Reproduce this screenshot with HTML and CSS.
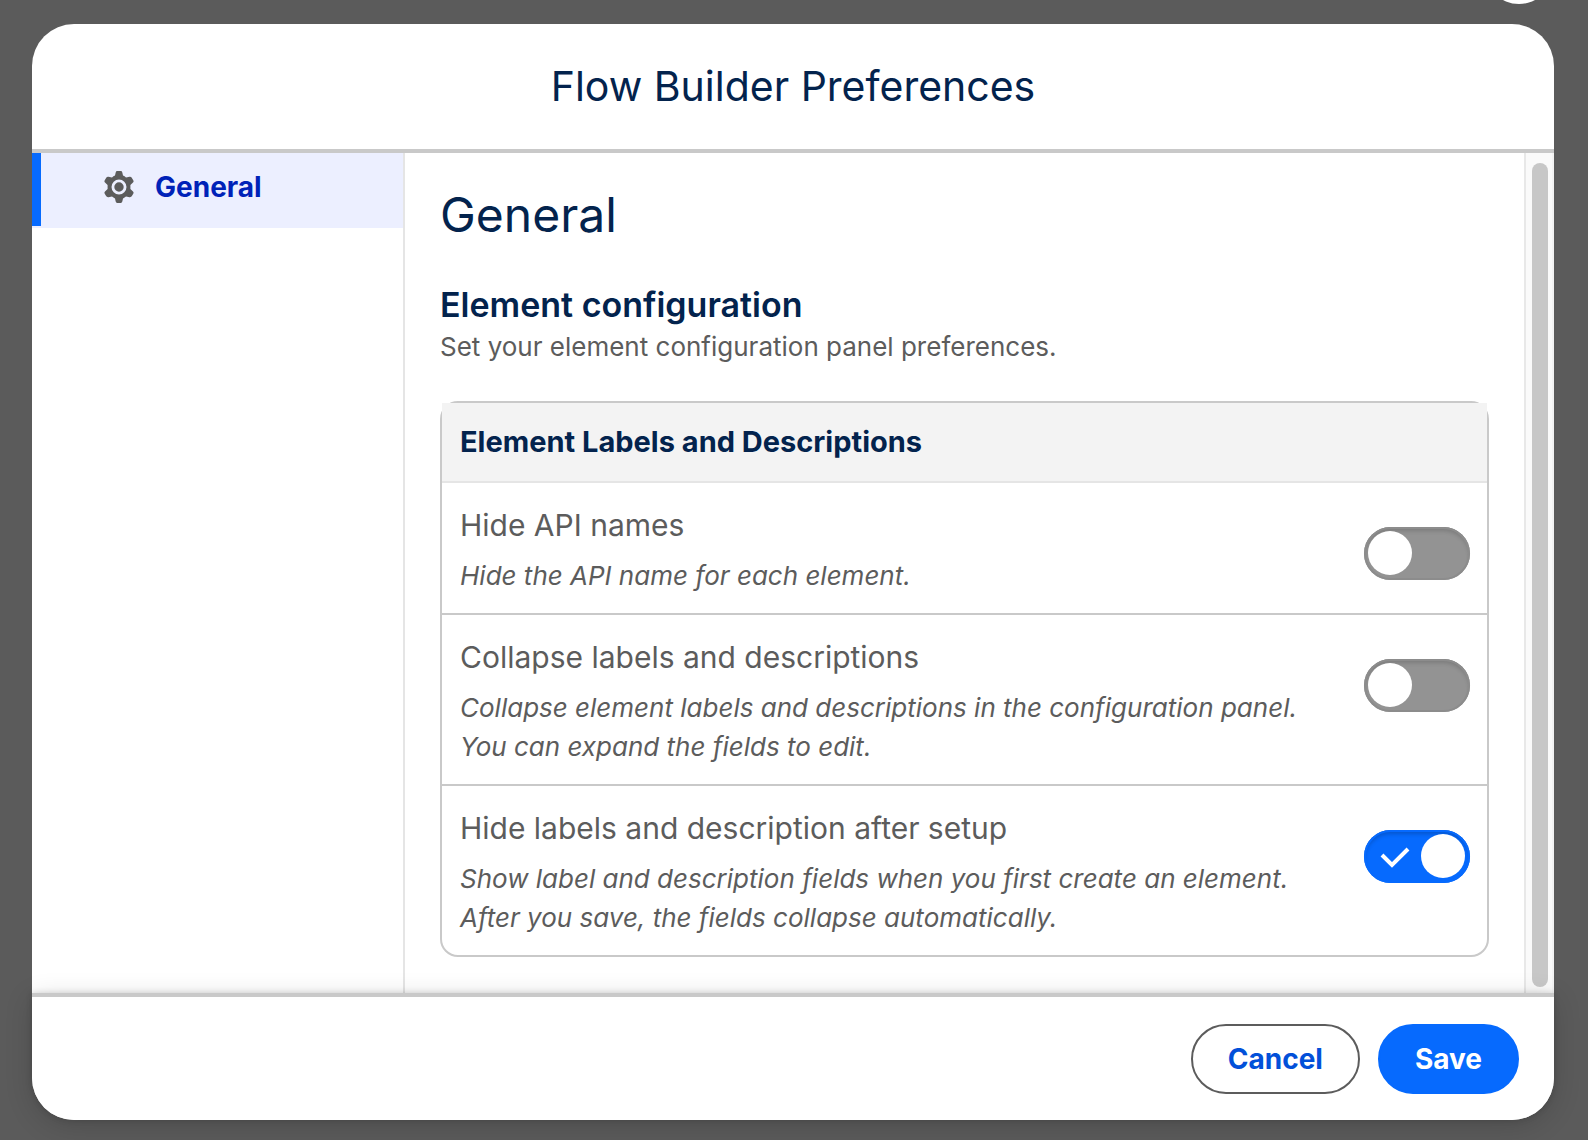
FILE: index.html
```html
<!DOCTYPE html>
<html lang="en">
<head>
    <meta charset="UTF-8">
    <meta name="viewport" content="width=device-width, initial-scale=1.0">
    <title>Flow Builder Preferences</title>
    <link rel="stylesheet" href="styles.css">
</head>
<body>
    <div class="backdrop-dot"></div>
    <div class="modal" role="dialog" aria-labelledby="modal-title">
        <header class="modal-header">
            <h1 id="modal-title">Flow Builder Preferences</h1>
        </header>
        <div class="modal-body">
            <nav class="sidebar">
                <a href="#general" class="sidebar-item on">
                    <svg class="icon-gear" viewBox="0 0 34 34" aria-hidden="true">
                        <path d="M15.2 1H18.8Q20 1 20.3 2.4L21 5.6Q22.6 6.3 24 7.4L27.5 6.8Q29.2 6.6 29.9 7.9L31.4 10.4Q32 11.6 31 12.5L28.4 14.9V19.1L31 21.5Q32 22.4 31.4 23.6L29.9 26.1Q29.2 27.4 27.5 27.2L24 26.6Q22.6 27.7 21 28.4L20.3 31.6Q20 33 18.8 33H15.2Q14 33 13.7 31.6L13 28.4Q11.4 27.7 10 26.6L6.5 27.2Q4.8 27.4 4.1 26.1L2.6 23.6Q2 22.4 3 21.5L5.6 19.1V14.9L3 12.5Q2 11.6 2.6 10.4L4.1 7.9Q4.8 6.6 6.5 6.8L10 7.4Q11.4 6.3 13 5.6L13.7 2.4Q14 1 15.2 1Z" fill="#5c5c5c" />
                        <circle cx="17" cy="17" r="6.1" fill="#5c5c5c" stroke="#ecefff" stroke-width="2.8" />
                    </svg>
                    General
                </a>
            </nav>
            <main class="content" id="general">
                <h2>General</h2>
                <h3>Element configuration</h3>
                <p class="intro">Set your element configuration panel preferences.</p>
                <section class="card">
                    <h4 class="card-header">Element Labels and Descriptions</h4>
                    <div class="row">
                        <div class="row-text">
                            <label for="hide-api">Hide API names</label>
                            <p>Hide the API name for each element.</p>
                        </div>
                        <div class="toggle">
                            <input type="checkbox" id="hide-api">
                        </div>
                    </div>
                    <div class="row">
                        <div class="row-text">
                            <label for="collapse">Collapse labels and descriptions</label>
                            <p>Collapse element labels and descriptions in the configuration panel. You can expand the fields to edit.</p>
                        </div>
                        <div class="toggle">
                            <input type="checkbox" id="collapse">
                        </div>
                    </div>
                    <div class="row">
                        <div class="row-text">
                            <label for="hide-after">Hide labels and description after setup</label>
                            <p>Show label and description fields when you first create an element. After you save, the fields collapse automatically.</p>
                        </div>
                        <div class="toggle">
                            <input type="checkbox" id="hide-after" checked>
                            <svg class="icon-check" viewBox="0 0 30 22" aria-hidden="true">
                                <path d="M2 9L12 19L28 3" fill="none" stroke="#fff" stroke-width="4" />
                            </svg>
                        </div>
                    </div>
                </section>
            </main>
            <div class="scrollbar"><div class="scrollbar-thumb"></div></div>
        </div>
        <footer class="modal-footer">
            <button type="button" class="btn">Cancel</button>
            <button type="button" class="btn btn-brand">Save</button>
        </footer>
    </div>
</body>
</html>
```
FILE: styles.css
```css
* {padding: 0;margin: 0;box-sizing: border-box;}
body {
    display: flex;
    min-height: 100vh;
    padding: 24px 34px 20px 32px;
    background: #5b5b5b;
    color: #5c5c5c;
    font-family: Inter, "Liberation Sans", sans-serif;
    overflow: hidden;
}
.backdrop-dot {
    position: absolute;
    top: -64px;
    right: 35px;
    width: 68px;
    height: 68px;
    border-radius: 50%;
    background: #fff;
}

.modal {flex: 1;display: flex;flex-direction: column;border-radius: 42px;background: #fff;position: relative;}
.modal-header {
    padding: 36px 32px;
    border-bottom: 4px solid #c9c9c9;
    text-align: center;
}
.modal-header h1 {font-size: 41px;line-height: 53px;font-weight: 400;color: #03234d;}
.modal-body {flex: 1;display: flex;}

/* sidebar */
.sidebar {width: 373px;border-right: 2px solid #e5e5e5;}
.sidebar-item {
    position: relative;
    display: flex;
    align-items: center;
    gap: 19px;
    height: 75px;
    padding: 0 0 8px 70px;
    background: #ecefff;
    color: #0022b8;
    font-size: 28px;
    font-weight: 700;
    text-decoration: none;
}
.sidebar-item.on::before {
    content: "";
    position: absolute;
    left: 0;
    top: 0;
    bottom: 2px;
    width: 9px;
    background: #066afe;
}
.icon-gear {width: 34px;height: 34px;}

/* content */
.content {flex: 1;padding: 28px 35px 35px;}
.content h2 {font-size: 48px;line-height: 68px;font-weight: 400;color: #03234d;}
.content h3 {margin-top: 34px;font-size: 34px;line-height: 44px;font-weight: 600;color: #03234d;}
.intro {font-size: 26px;line-height: 39px;}

.card {margin-top: 35px;border: 2px solid #c9c9c9;border-radius: 18px;}
.card-header {
    padding: 0 18px;
    background: #f3f3f3;
    border-bottom: 2px solid #e5e5e5;
    color: #03234d;
    font-size: 29px;
    line-height: 78px;
    font-weight: 700;
}
.row {display: flex;justify-content: space-between;padding: 18px 17px 18px 18px;}
.row + .row {border-top: 2px solid #c9c9c9;}
.row-text {max-width: 860px;}
.row-text label {display: block;margin-bottom: 7px;font-size: 30px;line-height: 48px;}
.row-text p {font-size: 26px;line-height: 39px;font-style: italic;}

.toggle {position: relative;height: 53px;margin-top: 26px;}
.toggle input {
    appearance: none;
    display: block;
    width: 106px;
    height: 53px;
    padding: 4px;
    border-radius: 27px;
    background: #939393;
    box-shadow: inset 0 0 0 2px #8c8c8c, inset 0 4px 4px rgba(0,0,0,.16);
}
.toggle input::before {
    content: "";
    display: block;
    width: 44px;
    height: 44px;
    border-radius: 50%;
    background: #fff;
}
.toggle input:checked {background: #066afe;box-shadow: inset 0 0 0 2px #066afe, inset 0 4px 4px rgba(0,0,0,.2);}
.toggle input:checked::before {margin-left: 53px;}
.icon-check {position: absolute;left: 16px;top: 16px;width: 30px;height: 22px;}

.scrollbar {
    width: 30px;
    padding: 10px 4px 6px 6px;
    border-left: 2px solid #e8e8e8;
    border-right: 2px solid #f3f3f3;
    background: #fafafa;
    display: flex;
}
.scrollbar-thumb {width: 16px;border-radius: 8px;background: #c7c7c7;}

/* footer */
.modal-footer {
    position: relative;
    display: flex;
    justify-content: flex-end;
    gap: 18px;
    padding: 27px 35px 26px;
    border-top: 4px solid #c9c9c9;
    border-radius: 0 0 42px 42px;
    background: #fff;
    box-shadow: 0 0 6px rgba(0,0,0,.16), 0 6px 28px rgba(0,0,0,.16);
}
.btn {
    height: 70px;
    padding: 0 35px;
    border: 2px solid #5c5c5c;
    border-radius: 35px;
    background: #fff;
    color: #0250d9;
    font-family: inherit;
    font-size: 28px;
    font-weight: 700;
}
.btn-brand {border-color: #066afe;background: #066afe;color: #fff;}
```
